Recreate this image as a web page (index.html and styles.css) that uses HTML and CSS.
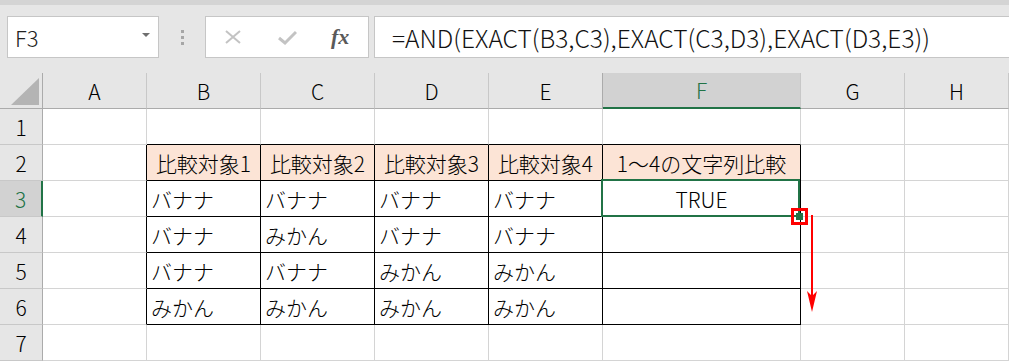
FILE: index.html
```html
<!DOCTYPE html>
<html lang="ja">
<head>
  <meta charset="UTF-8" />
  <title>EXACT 比較</title>
  <link rel="stylesheet" href="styles.css">
</head>
<body>
  <div class="top-strip"></div>
  <div class="toolbar">
    <div class="namebox"><span>F3</span><span class="drop"></span></div>
    <div class="grip"><i></i><i></i><i></i></div>
    <div class="fx-tools">
      <svg width="18" height="14" viewBox="0 0 18 14"><path d="M2 1 L16 13 M16 1 L2 13" stroke="#c3c3c3" stroke-width="2" fill="none"/></svg>
      <svg width="19" height="15" viewBox="0 0 19 15"><path d="M1 8 L7 13 L18 2" stroke="#c3c3c3" stroke-width="3" fill="none"/></svg>
      <span class="fx">fx</span>
    </div>
    <div class="formula">=AND(EXACT(B3,C3),EXACT(C3,D3),EXACT(D3,E3))</div>
  </div>

  <div class="sheet">
    <!-- column headers -->
    <div class="c corner"><span class="tri"></span></div>
    <div class="c h">A</div>
    <div class="c h">B</div>
    <div class="c h">C</div>
    <div class="c h">D</div>
    <div class="c h pre-sel">E</div>
    <div class="c h sel">F</div>
    <div class="c h">G</div>
    <div class="c h">H</div>

    <!-- row 1 -->
    <div class="c rh">1</div>
    <div class="c"></div>
    <div class="c bt"></div>
    <div class="c bt"></div>
    <div class="c bt"></div>
    <div class="c bt"></div>
    <div class="c bt"></div>
    <div class="c"></div>
    <div class="c"></div>

    <!-- row 2 -->
    <div class="c rh">2</div>
    <div class="c bl"></div>
    <div class="c t head">比較対象1</div>
    <div class="c t head">比較対象2</div>
    <div class="c t head">比較対象3</div>
    <div class="c t head">比較対象4</div>
    <div class="c t head">1～4の文字列比較</div>
    <div class="c"></div>
    <div class="c"></div>

    <!-- row 3 -->
    <div class="c rh sel">3</div>
    <div class="c bl"></div>
    <div class="c t">バナナ</div>
    <div class="c t">バナナ</div>
    <div class="c t">バナナ</div>
    <div class="c t">バナナ</div>
    <div class="c t mid active">
      TRUE
      <span class="handle-mark"></span>
      <span class="handle"></span>
      <svg class="arrow" width="12" height="98" viewBox="0 0 12 98">
        <path d="M6 0 V82" stroke="#ff0000" stroke-width="2"/>
        <polygon points="1,76 6,81 11,76 6,97" fill="#ff0000"/>
      </svg>
    </div>
    <div class="c"></div>
    <div class="c"></div>

    <!-- row 4 -->
    <div class="c rh">4</div>
    <div class="c bl"></div>
    <div class="c t">バナナ</div>
    <div class="c t">みかん</div>
    <div class="c t">バナナ</div>
    <div class="c t">バナナ</div>
    <div class="c t"></div>
    <div class="c"></div>
    <div class="c"></div>

    <!-- row 5 -->
    <div class="c rh">5</div>
    <div class="c bl"></div>
    <div class="c t">バナナ</div>
    <div class="c t">バナナ</div>
    <div class="c t">みかん</div>
    <div class="c t">みかん</div>
    <div class="c t"></div>
    <div class="c"></div>
    <div class="c"></div>

    <!-- row 6 -->
    <div class="c rh">6</div>
    <div class="c bl"></div>
    <div class="c t">みかん</div>
    <div class="c t">みかん</div>
    <div class="c t">みかん</div>
    <div class="c t">みかん</div>
    <div class="c t"></div>
    <div class="c"></div>
    <div class="c"></div>

    <!-- row 7 -->
    <div class="c rh">7</div>
    <div class="c"></div>
    <div class="c"></div>
    <div class="c"></div>
    <div class="c"></div>
    <div class="c"></div>
    <div class="c"></div>
    <div class="c"></div>
    <div class="c"></div>
  </div>
</body>
</html>
```

FILE: styles.css
```css
body { margin: 0; background: #e6e6e6; font-family: "Noto Sans CJK JP", "Noto Sans", sans-serif; overflow: hidden; }

.top-strip { height: 5px; background: #d4d4d4; }

.toolbar { display: flex; align-items: center; height: 42px; margin-top: 11px; padding-left: 7px; }
.namebox { box-sizing: border-box; width: 152px; height: 42px; background: #fff; border: 1px solid #c6c6c6; display: flex; align-items: center; justify-content: space-between; padding: 0 8px 0 7px; font-size: 22px; font-weight: 300; color: #222; }
.drop { width: 0; height: 0; border-left: 4px solid transparent; border-right: 4px solid transparent; border-top: 4px solid #6f6f6f; margin-top: -4px; }
.grip { width: 46px; display: flex; flex-direction: column; align-items: center; gap: 3px; }
.grip i { display: block; width: 3px; height: 3px; background: #a6a6a6; }
.fx-tools { box-sizing: border-box; width: 164px; height: 42px; background: #fff; border: 1px solid #c6c6c6; display: flex; align-items: center; padding: 0 0 0 18px; gap: 36px; }
.fx { font-family: "Liberation Serif", serif; font-style: italic; font-weight: bold; font-size: 22px; color: #5a5a5a; margin-left: -2px; }
.formula { box-sizing: border-box; flex: 1; height: 42px; margin-left: 5px; margin-right: -2px; background: #fff; border: 1px solid #c6c6c6; padding-left: 17px; display: flex; align-items: center; font-size: 24.5px; font-weight: 300; color: #111; white-space: nowrap; }

.sheet { display: grid; grid-template-columns: 43px 104px 114px 114px 114px 114px 198px 104px 104px; grid-auto-rows: 36px; margin-top: 15px; background: #fff; }
.c { box-sizing: border-box; border-right: 1px solid #d4d4d4; border-bottom: 1px solid #d4d4d4; display: flex; align-items: center; padding: 0 4px; font-size: 21px; font-weight: 300; color: #000; white-space: nowrap; }

.h { background: #e6e6e6; justify-content: center; border-right-color: #c8c8c8; border-bottom-color: #ababab; }
.h.pre-sel { border-right-color: #ababab; }
.h.sel { background: #d2d2d2; color: #217346; border-bottom: 2px solid #217346; }
.corner { background: #e6e6e6; border-right-color: #ababab; border-bottom-color: #ababab; justify-content: flex-end; align-items: flex-end; padding: 0 3px 3px 0; }
.tri { width: 0; height: 0; border-left: 28px solid transparent; border-bottom: 27px solid #b4b4b4; }
.rh { background: #e6e6e6; justify-content: center; border-right-color: #ababab; border-bottom-color: #c8c8c8; padding: 0; }
.rh.sel { background: #d2d2d2; color: #217346; border-right: 2px solid #217346; }

.t { border-right-color: #000; border-bottom-color: #000; }
.bl { border-right-color: #000; }
.bt { border-bottom-color: #000; }
.head { background: #fce4d6; justify-content: center; }
.mid { justify-content: center; }

.active { position: relative; z-index: 1; }
.active::after { content: ""; position: absolute; left: -2px; top: -2px; right: 0; bottom: -1px; border: 2px solid #217346; pointer-events: none; }
.handle { position: absolute; left: 193px; top: 32px; width: 7px; height: 7px; background: #217346; z-index: 2; }
.handle-mark { position: absolute; left: 188px; top: 27px; width: 17px; height: 17px; box-sizing: border-box; border: 3px solid #ff0000; z-index: 3; }
.arrow { position: absolute; left: 203px; top: 34px; z-index: 3; }
```
